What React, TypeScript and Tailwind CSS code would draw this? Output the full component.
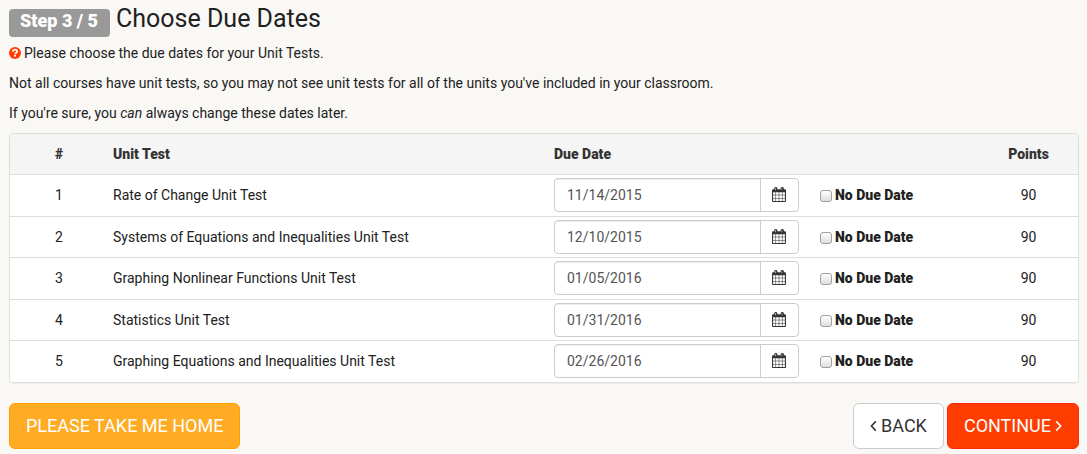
import { useState } from "react";

const unitTests = [
  { title: "Rate of Change Unit Test", due: "11/14/2015", points: 90 },
  { title: "Systems of Equations and Inequalities Unit Test", due: "12/10/2015", points: 90 },
  { title: "Graphing Nonlinear Functions Unit Test", due: "01/05/2016", points: 90 },
  { title: "Statistics Unit Test", due: "01/31/2016", points: 90 },
  { title: "Graphing Equations and Inequalities Unit Test", due: "02/26/2016", points: 90 },
];

const CalendarIcon = () => (
  <svg viewBox="64 0 1664 1792" className="h-[15px] w-[14px]" fill="currentColor" aria-hidden="true">
    <path d="M192 1664h288v-288h-288v288zm352 0h320v-288h-320v288zm-352-352h288v-320h-288v320zm352 0h320v-320h-320v320zm-352-384h288v-288h-288v288zm736 736h320v-288h-320v288zm-384-736h320v-288h-320v288zm768 736h288v-288h-288v288zm-384-352h320v-320h-320v320zm-352-864v-288q0-13-9.5-22.5t-22.5-9.5h-64q-13 0-22.5 9.5t-9.5 22.5v288q0 13 9.5 22.5t22.5 9.5h64q13 0 22.5-9.5t9.5-22.5zm736 864h288v-320h-288v320zm-384-384h320v-288h-320v288zm384 0h288v-288h-288v288zm32-480v-288q0-13-9.5-22.5t-22.5-9.5h-64q-13 0-22.5 9.5t-9.5 22.5v288q0 13 9.5 22.5t22.5 9.5h64q13 0 22.5-9.5t9.5-22.5zm384-64v1280q0 52-38 90t-90 38h-1408q-52 0-90-38t-38-90v-1280q0-52 38-90t90-38h128v-96q0-66 47-113t113-47h64q66 0 113 47t47 113v96h384v-96q0-66 47-113t113-47h64q66 0 113 47t47 113v96h128q52 0 90 38t38 90z" />
    <path d="M512 96h128v384H512zM1280 96h128v384h-128zM160 384h1472v224H160z" />
  </svg>
);

const HelpIcon = () => (
  <svg viewBox="0 0 12 12" className="h-3 w-3 shrink-0" aria-hidden="true">
    <circle cx="6" cy="6" r="6" fill="#ff3d00" />
    <path d="M3.9 4.7C4 3.2 4.9 2.7 6 2.7c1.3 0 2.1.7 2.1 1.7 0 1.4-2 1.5-2 2.9" fill="none" stroke="#fff" strokeWidth="1.8" />
    <path d="M5.1 8h1.9v1.8H5.1z" fill="#fff" />
  </svg>
);

const Angle = ({ direction }: { direction: "left" | "right" }) => (
  <svg viewBox="0 0 7 12" className="h-3 w-[7px]" fill="none" stroke="currentColor" strokeWidth="1.6" aria-hidden="true">
    <path d={direction === "left" ? "M5.8 1.4 1.4 6l4.4 4.6" : "M1.2 1.4 5.6 6l-4.4 4.6"} />
  </svg>
);

type UnitTest = (typeof unitTests)[number];

const UnitTestRow = ({ test, number }: { test: UnitTest; number: number }) => {
  const [due, setDue] = useState(test.due);
  const [noDueDate, setNoDueDate] = useState(false);

  return (
    <tr className="group border-t border-[#dddddd] bg-white">
      <td className="text-center">{number}</td>
      <td className="pl-[5px]">{test.title}</td>
      <td className="py-[3px] group-odd:pb-1">
        <div className="flex w-[245px] overflow-hidden rounded border border-[#cccccc]">
          <input
            type="text"
            value={due}
            onChange={(event) => setDue(event.target.value)}
            aria-label={`Due date for ${test.title}`}
            className="h-8 min-w-0 flex-1 px-3 text-[#555555] shadow-[inset_0_1px_1px_rgba(0,0,0,0.075)] outline-none"
          />
          <button
            type="button"
            aria-label={`Pick due date for ${test.title}`}
            className="flex w-[38px] items-center justify-center border-l border-[#cccccc] pr-0.5 text-[#333333]"
          >
            <CalendarIcon />
          </button>
        </div>
      </td>
      <td>
        <label className="flex items-center gap-[3px] font-['Roboto_Black','Roboto','Liberation_Sans',sans-serif] font-black">
          <input
            type="checkbox"
            checked={noDueDate}
            onChange={(event) => setNoDueDate(event.target.checked)}
            className="mt-[2px] h-3 w-3 appearance-none rounded-[3px] border border-[#a0a0a0] bg-linear-to-b from-white to-[#dedede] checked:bg-[#555555]"
          />
          No Due Date
        </label>
      </td>
      <td className="text-center">{test.points}</td>
    </tr>
  );
};

export default function App() {
  return (
    <main className="min-h-screen bg-[#faf8f5] pt-1 pr-2 pl-[9px] font-['Roboto','Liberation_Sans',sans-serif] text-sm leading-5 text-[#212121]">
      <h1 className="mb-[6px] flex items-start gap-[6px] text-[25px] leading-[30px]">
        <span className="mt-[5px] rounded bg-[#999999] pr-3 pb-1 pl-[11px] text-lg leading-6 font-black text-white">
          Step 3 / 5
        </span>
        Choose Due Dates
      </h1>
      <p className="mb-[10px] flex items-center gap-[3px]">
        <HelpIcon />
        Please choose the due dates for your Unit Tests.
      </p>
      <p className="mb-[10px]">
        Not all courses have unit tests, so you may not see unit tests for all of the units you've included in your classroom.
      </p>
      <p className="mb-[10px]">
        If you're sure, you <em>can</em> always change these dates later.
      </p>

      <div className="overflow-hidden rounded border border-[#dddddd] shadow-[0_1px_1px_rgba(0,0,0,0.05)]">
        <table className="w-full table-fixed">
          <colgroup>
            <col className="w-[98px]" />
            <col />
            <col className="w-[266px]" />
            <col className="w-[159px]" />
            <col className="w-[99px]" />
          </colgroup>
          <thead className="bg-[#f5f5f5] font-['Roboto_Black','Roboto','Liberation_Sans',sans-serif] text-[#333333]">
            <tr className="h-10">
              <th className="font-black">#</th>
              <th className="pl-[5px] text-left font-black">Unit Test</th>
              <th className="text-left font-black">Due Date</th>
              <th />
              <th className="font-black">Points</th>
            </tr>
          </thead>
          <tbody>
            {unitTests.map((test, index) => (
              <UnitTestRow key={test.title} test={test} number={index + 1} />
            ))}
          </tbody>
        </table>
      </div>

      <div className="mt-5 flex gap-[3px] text-lg leading-6">
        <button type="button" className="mr-auto rounded-md border border-[#ffa000] bg-[#ffab24] px-4 py-[10px] text-white">
          PLEASE TAKE ME HOME
        </button>
        <button type="button" className="flex items-center gap-1 rounded-md border border-[#cccccc] bg-white px-4 py-[10px] text-[#333333]">
          <Angle direction="left" />
          BACK
        </button>
        <button type="button" className="flex items-center gap-1 rounded-md border border-[#ff2a00] bg-[#ff3d00] px-4 py-[10px] text-white">
          CONTINUE
          <Angle direction="right" />
        </button>
      </div>
    </main>
  );
}
